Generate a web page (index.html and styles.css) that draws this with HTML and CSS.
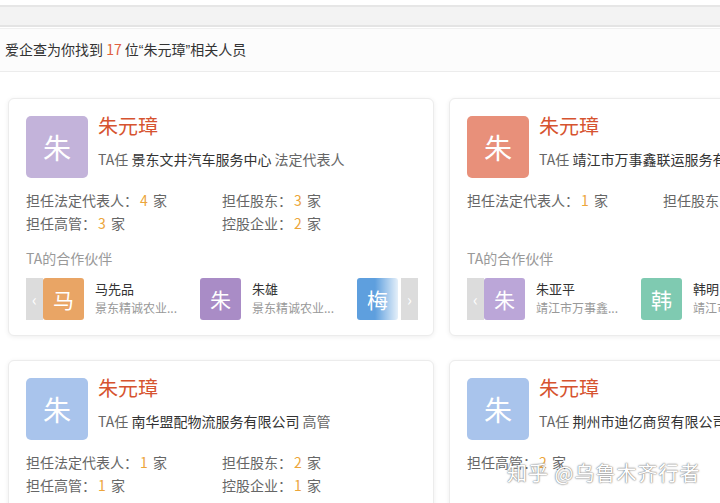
FILE: index.html
```html
<!DOCTYPE html>
<html lang="zh">
<head>
<meta charset="utf-8">
<link rel="stylesheet" href="styles.css">
</head>
<body>
<div class="topbar"></div>
<div class="result-bar">爱企查为你找到 <span class="count">17</span> 位<span class="q">“</span>朱元璋<span class="q">”</span>相关人员</div>
<div class="grid">
  <div class="card">
    <div class="head">
      <div class="avatar av-purple">朱</div>
      <div class="info">
        <div class="name">朱元璋</div>
        <div class="pos"><span class="muted">TA任</span> 景东文井汽车服务中心 <span class="muted">法定代表人</span></div>
      </div>
    </div>
    <div class="stats">
      <div>担任法定代表人：<b>4</b> 家</div>
      <div>担任股东：<b>3</b> 家</div>
      <div>担任高管：<b>3</b> 家</div>
      <div>控股企业：<b>2</b> 家</div>
    </div>
    <div class="plabel">TA的合作伙伴</div>
    <div class="partners">
      <div class="arrow">‹</div>
      <div class="track">
        <div class="pitem"><div class="pav p-orange">马</div><div class="ptext"><div class="pname">马先品</div><div class="psub">景东精诚农业...</div></div></div>
        <div class="pitem"><div class="pav p-purple">朱</div><div class="ptext"><div class="pname">朱雄</div><div class="psub">景东精诚农业...</div></div></div>
        <div class="pitem"><div class="pav p-blue">梅</div><div class="ptext"><div class="pname">梅</div><div class="psub">景东精诚农业...</div></div></div>
      </div>
      <div class="arrow">›</div>
    </div>
  </div>

  <div class="card">
    <div class="head">
      <div class="avatar av-salmon">朱</div>
      <div class="info">
        <div class="name">朱元璋</div>
        <div class="pos"><span class="muted">TA任</span> 靖江市万事鑫联运服务有限公司 <span class="muted">法定代表人</span></div>
      </div>
    </div>
    <div class="stats">
      <div>担任法定代表人：<b>1</b> 家</div>
      <div>担任股东：<b>1</b> 家</div>
    </div>
    <div class="plabel">TA的合作伙伴</div>
    <div class="partners">
      <div class="arrow">‹</div>
      <div class="track">
        <div class="pitem"><div class="pav p-lilac">朱</div><div class="ptext"><div class="pname">朱亚平</div><div class="psub">靖江市万事鑫...</div></div></div>
        <div class="pitem"><div class="pav p-green">韩</div><div class="ptext"><div class="pname">韩明</div><div class="psub">靖江市万事鑫...</div></div></div>
        <div class="pitem"><div class="pav p-blue">王</div><div class="ptext"><div class="pname">王</div><div class="psub">靖江市万事鑫...</div></div></div>
      </div>
      <div class="arrow">›</div>
    </div>
  </div>

  <div class="card">
    <div class="head">
      <div class="avatar av-blue">朱</div>
      <div class="info">
        <div class="name">朱元璋</div>
        <div class="pos"><span class="muted">TA任</span> 南华盟配物流服务有限公司 <span class="muted">高管</span></div>
      </div>
    </div>
    <div class="stats">
      <div>担任法定代表人：<b>1</b> 家</div>
      <div>担任股东：<b>2</b> 家</div>
      <div>担任高管：<b>1</b> 家</div>
      <div>控股企业：<b>1</b> 家</div>
    </div>
  </div>

  <div class="card">
    <div class="head">
      <div class="avatar av-blue">朱</div>
      <div class="info">
        <div class="name">朱元璋</div>
        <div class="pos"><span class="muted">TA任</span> 荆州市迪亿商贸有限公司 <span class="muted">高管</span></div>
      </div>
    </div>
    <div class="stats">
      <div>担任高管：<b>2</b> 家</div>
    </div>
  </div>
</div>
<div class="watermark">知乎 @乌鲁木齐行者</div>
</body>
</html>
```

FILE: styles.css
```css
html, body {
  margin: 0;
  padding: 0;
  background: #fff;
  width: 720px;
  height: 503px;
  overflow: hidden;
  font-family: "Noto Sans CJK SC", "Noto Sans", sans-serif;
  color: #333;
  position: relative;
}
.topbar {
  margin-top: 5px;
  height: 18px;
  background: #f3f3f3;
  border-top: 2px solid #e6e6e6;
  border-bottom: 2px solid #e4e4e4;
}
.result-bar {
  margin-top: 1px;
  height: 42px;
  line-height: 40px;
  padding-left: 5px;
  background: #fcfcfc;
  border-top: 1px solid #f0f0f0;
  border-bottom: 1px solid #ececec;
  font-size: 14px;
  color: #333;
  white-space: nowrap;
}
.q { font-family: "Liberation Sans", sans-serif; }
.count { color: #e0603e; }
.grid {
  display: grid;
  grid-template-columns: 426px 426px;
  column-gap: 15px;
  row-gap: 24px;
  padding: 26px 0 0 8px;
  width: 900px;
}
.card {
  box-sizing: border-box;
  height: 238px;
  padding: 17px 16px 0 17px;
  border: 1px solid #ececec;
  border-radius: 6px;
  background: #fff;
  box-shadow: 0 1px 5px rgba(0,0,0,0.07);
  overflow: hidden;
}
.head {
  display: flex;
  gap: 10px;
}
.avatar {
  width: 62px;
  height: 62px;
  border-radius: 5px;
  flex: none;
  color: #fff;
  font-size: 28px;
  display: flex;
  align-items: center;
  justify-content: center;
}
.av-purple { background: #c3b3da; }
.av-salmon { background: #e8907a; }
.av-blue { background: #a9c4ec; }
.info { min-width: 0; }
.name {
  font-size: 20px;
  line-height: 24px;
  margin-top: -2px;
  color: #d6532f;
}
.pos {
  margin-top: 11px;
  font-size: 14px;
  line-height: 20px;
  color: #333;
  white-space: nowrap;
}
.muted { color: #666; }
.stats {
  display: grid;
  grid-template-columns: 196px 196px;
  grid-template-rows: 23px 23px;
  margin-top: 11px;
  font-size: 14px;
  line-height: 23px;
  color: #666;
  white-space: nowrap;
}
.stats b {
  font-weight: normal;
  color: #eca53a;
  margin: 0 2px;
}
.plabel {
  margin-top: 13px;
  font-size: 14px;
  line-height: 20px;
  color: #999;
}
.partners {
  display: flex;
  margin-top: 10px;
  height: 42px;
  width: 392px;
}
.arrow {
  flex: none;
  width: 17px;
  height: 42px;
  background: #dcdcdc;
  color: #fff;
  font-size: 16px;
  display: flex;
  align-items: center;
  justify-content: center;
}
.track {
  flex: 1;
  display: flex;
  overflow: hidden;
  position: relative;
}
.track::after {
  content: "";
  position: absolute;
  right: 0;
  top: 0;
  width: 26px;
  height: 42px;
  background: linear-gradient(to right, rgba(255,255,255,0), rgba(255,255,255,0.95));
}
.pitem {
  flex: none;
  width: 157px;
  display: flex;
  gap: 11px;
}
.pav {
  flex: none;
  width: 41px;
  height: 42px;
  border-radius: 3px;
  color: #fff;
  font-size: 21px;
  display: flex;
  align-items: center;
  justify-content: center;
}
.p-orange { background: #e9a565; }
.p-purple { background: #a98cc6; }
.p-lilac { background: #bba6d8; }
.p-green { background: #7fcab1; }
.p-blue { background: #5e9fde; }
.ptext { min-width: 0; }
.pname {
  font-size: 13px;
  line-height: 18px;
  margin-top: 2px;
  color: #333;
}
.psub {
  font-size: 12px;
  line-height: 18px;
  margin-top: 1px;
  color: #999;
  white-space: nowrap;
}
.watermark {
  position: absolute;
  left: 507px;
  top: 459px;
  font-size: 20px;
  line-height: 28px;
  color: #fff;
  letter-spacing: 1px;
  text-shadow: 0 0 2px #777, 0 0 1px #777;
  white-space: nowrap;
}
```
